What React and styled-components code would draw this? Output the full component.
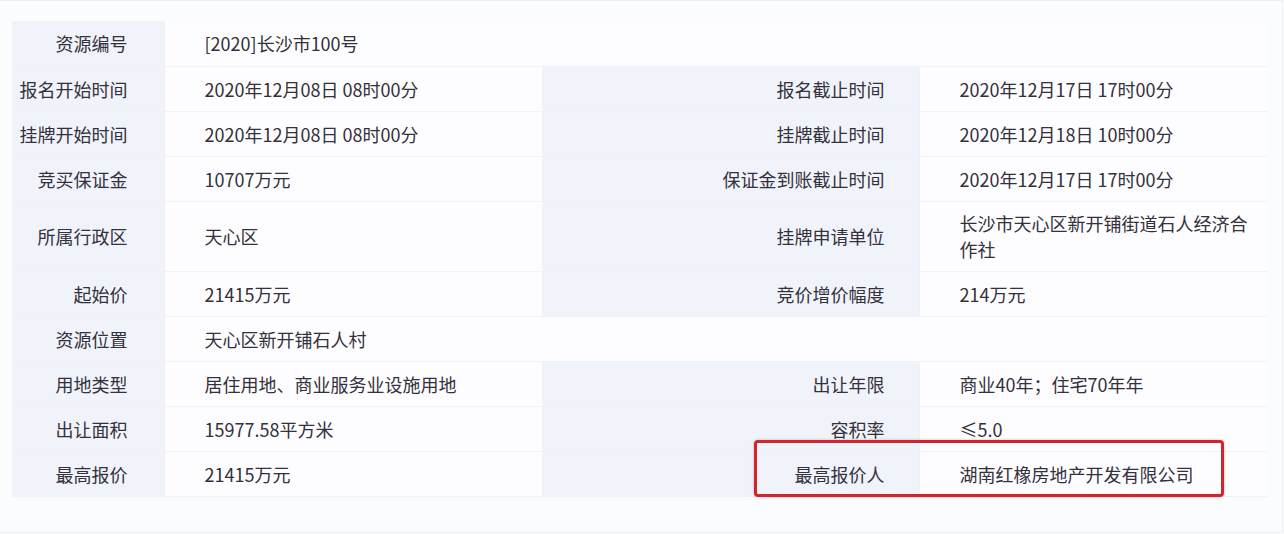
import React from "react";
import styled, { createGlobalStyle } from "styled-components";

const GlobalStyle = createGlobalStyle`
  html, body {
    margin: 0;
    padding: 0;
    background: #fbfcfe;
  }
  body {
    font-family: "Liberation Sans", "Noto Sans CJK SC", sans-serif;
  }
`;

const rows = [
  { label: "资源编号", value: "[2020]长沙市100号", span: true },
  {
    label: "报名开始时间",
    value: "2020年12月08日 08时00分",
    label2: "报名截止时间",
    value2: "2020年12月17日 17时00分",
  },
  {
    label: "挂牌开始时间",
    value: "2020年12月08日 08时00分",
    label2: "挂牌截止时间",
    value2: "2020年12月18日 10时00分",
  },
  {
    label: "竞买保证金",
    value: "10707万元",
    label2: "保证金到账截止时间",
    value2: "2020年12月17日 17时00分",
  },
  {
    label: "所属行政区",
    value: "天心区",
    label2: "挂牌申请单位",
    value2: "长沙市天心区新开铺街道石人经济合作社",
    tall: true,
  },
  { label: "起始价", value: "21415万元", label2: "竞价增价幅度", value2: "214万元" },
  { label: "资源位置", value: "天心区新开铺石人村", span: true },
  {
    label: "用地类型",
    value: "居住用地、商业服务业设施用地",
    label2: "出让年限",
    value2: "商业40年；住宅70年年",
  },
  { label: "出让面积", value: "15977.58平方米", label2: "容积率", value2: "≤5.0" },
  {
    label: "最高报价",
    value: "21415万元",
    label2: "最高报价人",
    value2: "湖南红橡房地产开发有限公司",
  },
];

function App() {
  return (
    <>
      <GlobalStyle />
      <Card>
        <TableWrap>
          <Table>
            <colgroup>
              <col style={{ width: 152 }} />
              <col style={{ width: 378 }} />
              <col style={{ width: 377 }} />
              <col style={{ width: 349 }} />
            </colgroup>
            <tbody>
              {rows.map((r) => (
                <Row key={r.label} $tall={r.tall}>
                  <Label>{r.label}</Label>
                  {r.span ? (
                    <Value colSpan={3}>{r.value}</Value>
                  ) : (
                    <>
                      <Value>{r.value}</Value>
                      <Label $wide>{r.label2}</Label>
                      <Value $last>{r.value2}</Value>
                    </>
                  )}
                </Row>
              ))}
            </tbody>
          </Table>
          <Highlight />
        </TableWrap>
      </Card>
    </>
  );
}

const Card = styled.div`
  box-sizing: border-box;
  width: 1283px;
  height: 533px;
  background: #fbfcfe;
  border: 1px solid #eef0f4;
  border-left: none;
  padding: 20px 0 0 12px;
`;

const TableWrap = styled.div`
  position: relative;
  width: 1256px;
`;

const Table = styled.table`
  width: 1256px;
  table-layout: fixed;
  border-collapse: collapse;
  font-family: "Noto Sans CJK SC", sans-serif;
  font-size: 18px;
  color: #34303c;
`;

const Row = styled.tr`
  height: ${(p) => (p.$tall ? "70px" : "45px")};
`;

const Cell = styled.td`
  padding: 0;
  line-height: 26px;
  border-bottom: 1px solid #f0f2f6;
  vertical-align: middle;
  white-space: nowrap;
`;

const Label = styled(Cell)`
  background: #f0f4fa;
  text-align: right;
  padding-right: ${(p) => (p.$wide ? "34px" : "36px")};
  border-right: 1px solid #edf1f6;
`;

const Value = styled(Cell)`
  background: #fdfdff;
  padding-left: 40px;
  padding-right: 14px;
  white-space: ${(p) => (p.$last ? "normal" : "nowrap")};
`;

const Highlight = styled.div`
  position: absolute;
  left: 742px;
  top: 419px;
  width: 470px;
  height: 57px;
  box-sizing: border-box;
  border: 3px solid #cd272d;
  border-radius: 4px;
  box-shadow: 0 0 3px rgba(205, 39, 45, 0.35);
  pointer-events: none;
`;

export default App;
